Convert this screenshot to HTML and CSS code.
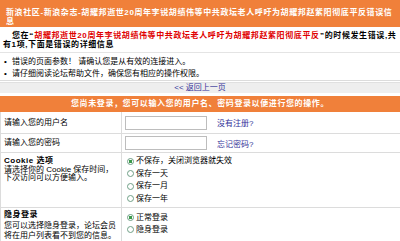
FILE: index.html
```html
<!DOCTYPE html>
<html lang="zh-CN">
<head>
    <meta charset="UTF-8">
    <title>新浪社区 - 错误信息</title>
<link rel="stylesheet" href="styles.css">
</head>
<body>
    <div class="title">新浪社区-新浪杂志-胡耀邦逝世20周年李锐胡绩伟等中共政坛老人呼吁为胡耀邦赵紫阳彻底平反错误信息</div>
    <div class="msg">您在“<span class="red">胡耀邦逝世20周年李锐胡绩伟等中共政坛老人呼吁为胡耀邦赵紫阳彻底平反</span>”的时候发生错误,共有1项,下面是错误的详细信息</div>
    <ul class="errors">
        <li>错误的页面参数！ 请确认您是从有效的连接进入。</li>
        <li>请仔细阅读论坛帮助文件，确保您有相应的操作权限。</li>
    </ul>
    <div class="back"><a href="#">&lt;&lt; 返回上一页</a></div>
    <div class="bar">您尚未登录，您可以输入您的用户名、密码登录以便进行您的操作。</div>

    <div class="login">
        <div class="row first">
            <div class="label">请输入您的用户名</div>
            <div class="field"><input class="box" type="text"><a href="#">没有注册?</a></div>
        </div>
        <div class="row second">
            <div class="label">请输入您的密码</div>
            <div class="field"><input class="box" type="password"><a href="#">忘记密码?</a></div>
        </div>
        <div class="row">
            <div class="label tight">
                <b>Cookie 选项</b><br>
                请选择你的 Cookie 保存时间，<br>
                下次访问可以方便输入。
            </div>
            <div class="options">
                <div class="opt"><span class="dot on"></span>不保存，关闭浏览器就失效</div>
                <div class="opt"><span class="dot"></span>保存一天</div>
                <div class="opt"><span class="dot"></span>保存一月</div>
                <div class="opt"><span class="dot"></span>保存一年</div>
            </div>
        </div>
        <div class="row">
            <div class="label loose">
                <b>隐身登录</b><br>
                您可以选择隐身登录，论坛会员<br>
                将在用户列表看不到您的信息。
            </div>
            <div class="options hide">
                <div class="opt"><span class="dot on"></span>正常登录</div>
                <div class="opt"><span class="dot"></span>隐身登录</div>
            </div>
        </div>
    </div>
</body>
</html>
```

FILE: styles.css
```css
/*page*/
body{
    margin: 0;
    background-color: #fff;
    color: #000;
    font-family: "Liberation Sans", "Noto Sans CJK SC", sans-serif;
    font-size: 8px;
}
a{
    color: #333399;
    text-decoration: none;
}
/*error message*/
.title{
    background-color: #f0803a;
    color: #fff;
    font-weight: bold;
    letter-spacing: 0.6px;
    line-height: 9px;
    padding: 8px 6px 1px;
}
.msg{
    font-weight: bold;
    letter-spacing: 0.6px;
    line-height: 9px;
    padding: 4px 3px 3px;
    text-indent: 9px;
    border-bottom: 1px solid #e4e4e4;
}
.red{
    color: #e00000;
    margin: 0 0.5px;
}
.errors{
    list-style: none;
    margin: 0;
    padding: 3px 0 0;
    border-bottom: 1px solid #dcdcdc;
}
.errors li{
    display: flex;
    line-height: 12px;
}
.errors li:before{
    content: "•";
    width: 8px;
    padding-left: 4px;
}
.back{
    margin-top: 1px;
    background-color: #eeeeee;
    border-top: 1px solid #e0e0e0;
    text-align: center;
    line-height: 10px;
}
.bar{
    margin-top: 3px;
    background-color: #f0803a;
    color: #fff;
    font-weight: bold;
    letter-spacing: 0.6px;
    text-align: center;
    line-height: 16px;
}
/*login form*/
.row{
    display: grid;
    grid-template-columns: 121px 1fr;
    border-left: 1px solid #dcdcdc;
    border-bottom: 1px solid #dcdcdc;
}
.label{
    border-right: 1px solid #dcdcdc;
    padding: 2px 0 2px 3px;
    line-height: 10px;
}
.label b{
    letter-spacing: 0.5px;
}
.tight{
    padding-top: 4px;
    line-height: 8.6px;
}
.loose{
    padding-top: 2px;
    line-height: 10.5px;
}
.first{
    height: 21px;
}
.second{
    height: 18px;
}
.first .label, .second .label{
    display: flex;
    align-items: center;
    padding: 0 0 0 3px;
}
.field{
    display: flex;
    align-items: center;
    gap: 10px;
    padding-left: 3px;
}
.box{
    box-sizing: border-box;
    width: 82px;
    height: 14px;
    margin: 0;
    padding: 0;
    border: 1px solid #bdbdbd;
    background-color: #fff;
}
.options{
    padding: 2px 0 2px 5px;
    line-height: 12.5px;
}
.hide{
    padding-top: 4px;
    line-height: 11.5px;
}
.opt{
    display: flex;
    align-items: center;
    gap: 2px;
}
.dot{
    box-sizing: border-box;
    width: 7px;
    height: 7px;
    border: 1px solid #6f9f86;
    border-radius: 50%;
    background-color: #fff;
}
.dot.on{
    background: radial-gradient(circle, #3a9a4a 0 1.5px, #fff 2px);
}
```
